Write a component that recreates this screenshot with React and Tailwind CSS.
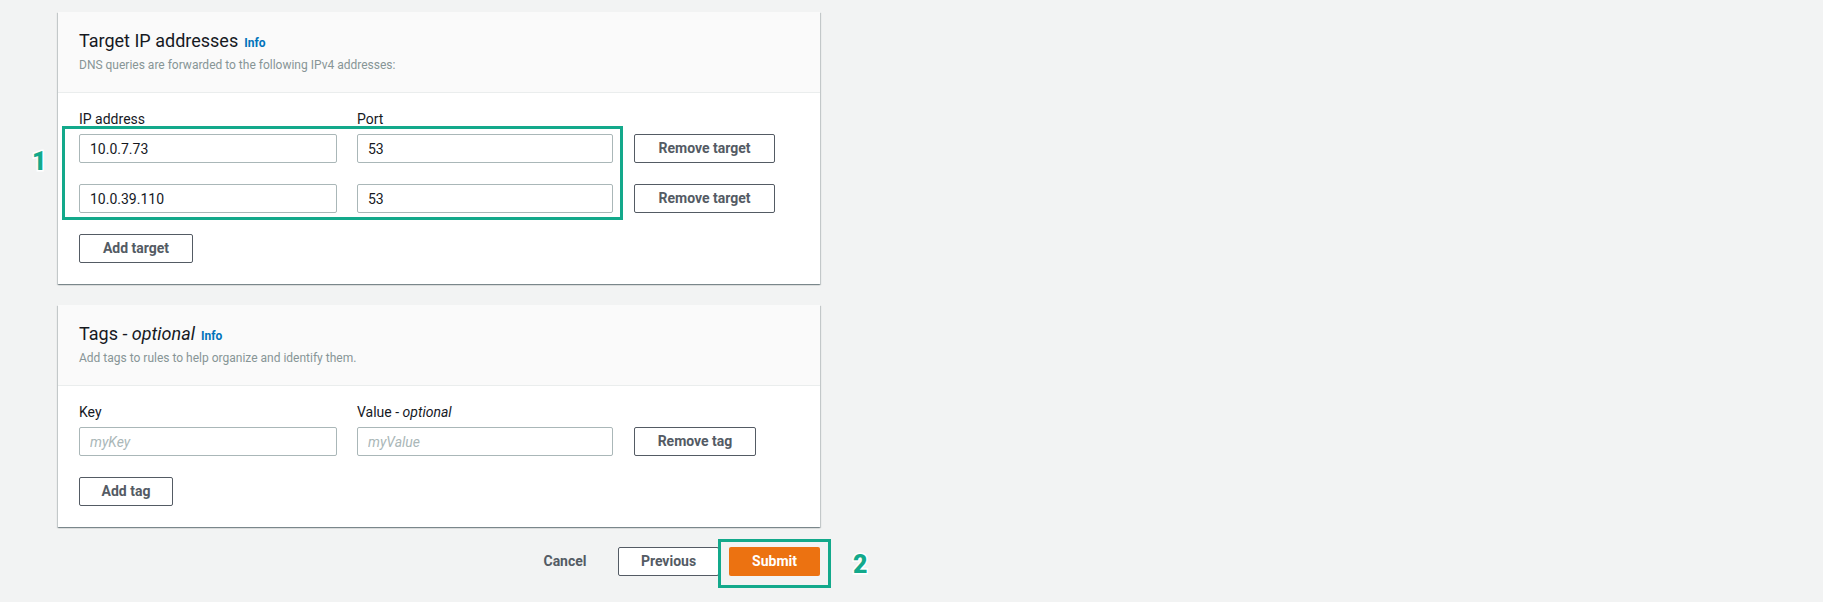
import React from "react"

const font = "font-['Roboto','Liberation_Sans',sans-serif]"

// shared bits
function Info() {
  return <span className="ml-[6px] text-[12px] leading-none font-bold text-[#0073bb] align-baseline">Info</span>
}

function Header({ title, desc }) {
  return (
    <div className="border-b border-[#eaeded] bg-[#fafafa] pl-[21px] pt-[18px] pb-[19px]">
      <h2 className="text-[18px] leading-[22px] font-normal text-[#16191f]">{title}</h2>
      <p className="mt-[5px] text-[12px] leading-[16px] text-[#879596]">{desc}</p>
    </div>
  )
}

function Field({ value, placeholder, width }) {
  return (
    <input
      readOnly
      value={value}
      placeholder={placeholder}
      className={`h-[29px] ${width} rounded-[2px] border border-[#aab7b8] bg-white px-[10px] text-[14px] text-[#16191f] outline-none placeholder:italic placeholder:text-[#aab7b8]`}
    />
  )
}

function Btn({ children, width }) {
  return (
    <button className={`h-[29px] ${width} rounded-[2px] border border-[#545b64] bg-white text-[14px] font-bold text-[#545b64]`}>
      {children}
    </button>
  )
}

const panel =
  "bg-white shadow-[0_1px_1px_0_rgba(0,28,36,0.3),1px_1px_1px_0_rgba(0,28,36,0.15),-1px_1px_1px_0_rgba(0,28,36,0.15)]"

const marker =
  "absolute text-[25px] leading-none font-black text-[#13a98b] [-webkit-text-stroke:3px_white] [paint-order:stroke_fill]"

export default function App() {
  const targets = [
    { ip: "10.0.7.73", port: "53" },
    { ip: "10.0.39.110", port: "53" },
  ]

  return (
    <div className={`min-h-screen bg-[#f2f3f3] ${font}`}>
      <div className="ml-[58px] w-[762px] pt-[12px]">
        {/* Target IP addresses */}
        <div className={panel}>
          <Header
            title={
              <>
                Target IP addresses<Info />
              </>
            }
            desc="DNS queries are forwarded to the following IPv4 addresses:"
          />
          <div className="relative pl-[21px] pt-[16px] pb-[21px]">
            <div className="flex gap-[20px] text-[14px] leading-[20px] text-[#16191f]">
              <span className="w-[258px]">IP address</span>
              <span>Port</span>
            </div>
            <div className="mt-[5px] flex flex-col gap-[21px]">
              {targets.map((t) => (
                <div key={t.ip} className="flex items-center">
                  <Field value={t.ip} width="w-[258px]" />
                  <div className="ml-[20px]">
                    <Field value={t.port} width="w-[256px]" />
                  </div>
                  <div className="ml-[21px]">
                    <Btn width="w-[141px]">Remove target</Btn>
                  </div>
                </div>
              ))}
              <div>
                <Btn width="w-[114px]">Add target</Btn>
              </div>
            </div>

            {/* annotation 1 */}
            <div className="absolute left-[4px] top-[33px] h-[94px] w-[561px] border-[3px] border-[#13a98b]" />
            <span className={`${marker} left-[-26px] top-[56px]`}>1</span>
          </div>
        </div>

        {/* Tags */}
        <div className={`${panel} mt-[21px]`}>
          <Header
            title={
              <>
                Tags - <i>optional</i>
                <Info />
              </>
            }
            desc="Add tags to rules to help organize and identify them."
          />
          <div className="pl-[21px] pt-[16px] pb-[21px]">
            <div className="flex gap-[20px] text-[14px] leading-[20px] text-[#16191f]">
              <span className="w-[258px]">Key</span>
              <span>
                Value - <i>optional</i>
              </span>
            </div>
            <div className="mt-[5px] flex items-center">
              <Field placeholder="myKey" width="w-[258px]" />
              <div className="ml-[20px]">
                <Field placeholder="myValue" width="w-[256px]" />
              </div>
              <div className="ml-[21px]">
                <Btn width="w-[122px]">Remove tag</Btn>
              </div>
            </div>
            <div className="mt-[21px]">
              <Btn width="w-[94px]">Add tag</Btn>
            </div>
          </div>
        </div>

        {/* footer */}
        <div className="relative mt-[20px] flex justify-end">
          <button className="h-[29px] w-[84px] text-[14px] font-bold text-[#545b64]">Cancel</button>
          <div className="ml-[11px]">
            <Btn width="w-[101px]">Previous</Btn>
          </div>
          <button className="ml-[10px] h-[29px] w-[91px] rounded-[2px] bg-[#ec7211] text-[14px] font-bold text-white">
            Submit
          </button>

          {/* annotation 2 */}
          <div className="absolute left-[660px] top-[-8px] h-[49px] w-[113px] border-[3px] border-[#13a98b]" />
          <span className={`${marker} left-[795px] top-[5px]`}>2</span>
        </div>
      </div>
    </div>
  )
}
